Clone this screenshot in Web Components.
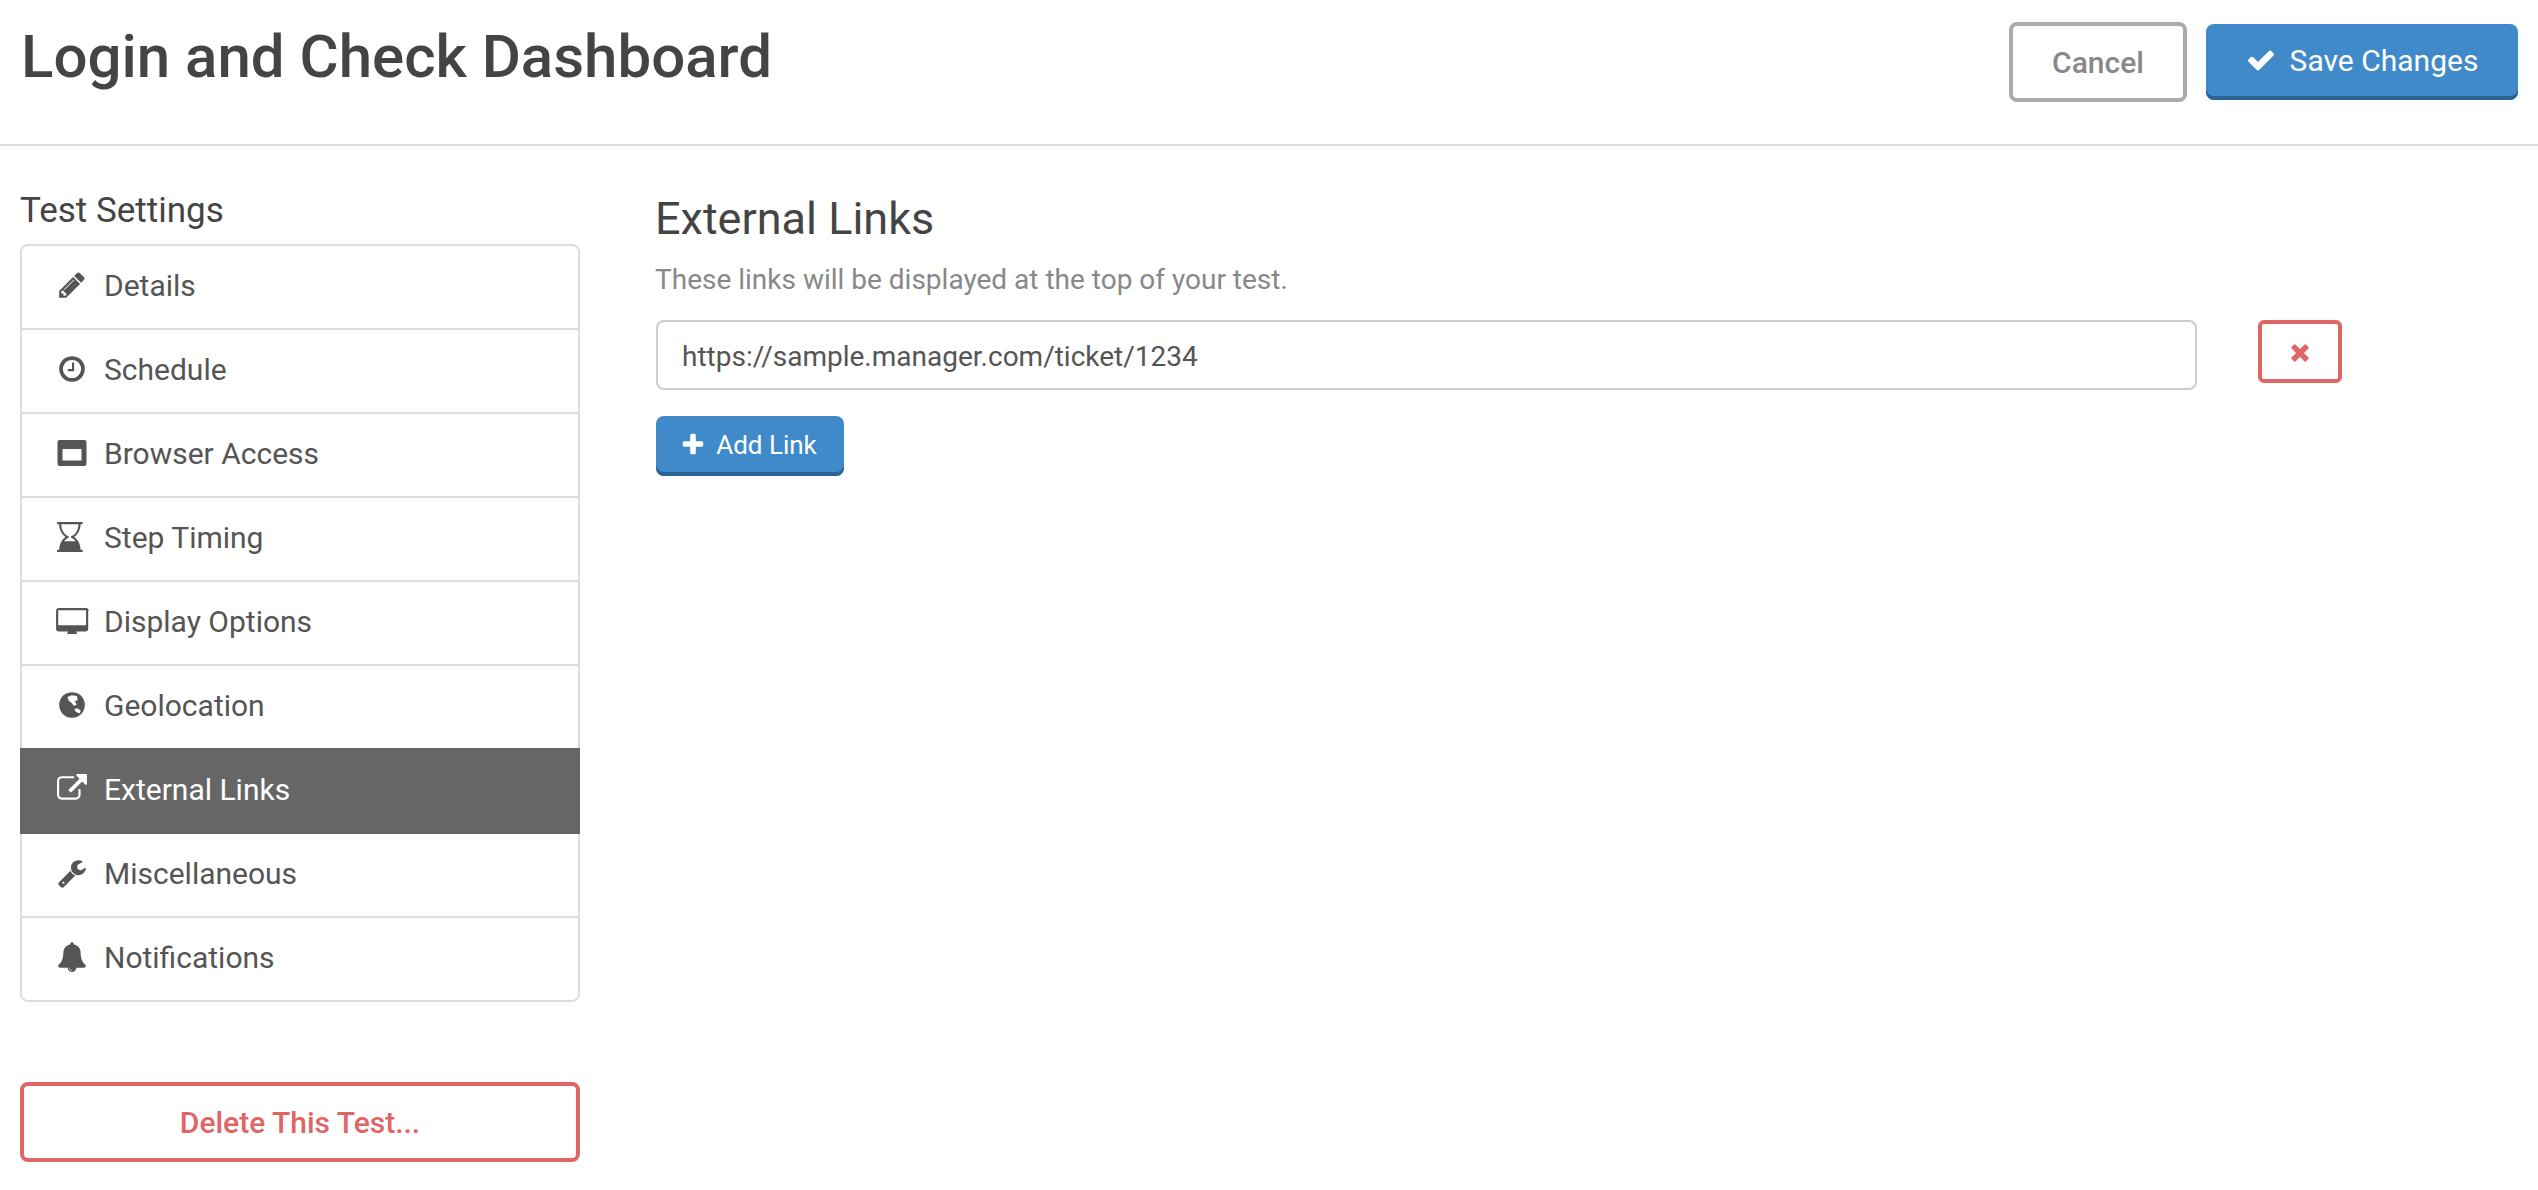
<!DOCTYPE html>
<html lang="en">
<head>
<meta charset="utf-8">
<title>Login and Check Dashboard</title>
<style>
  html, body { margin: 0; background: #fff; }
  body { font-family: Roboto, "Liberation Sans", sans-serif; color: #444; }
</style>
</head>
<body>
<test-page>
  <page-header slot="header" heading="Login and Check Dashboard">
    <ui-button variant="ghost" style="width:178px">Cancel</ui-button>
    <ui-button variant="primary" icon="check" style="width:312px">Save Changes</ui-button>
  </page-header>

  <settings-nav slot="side" heading="Test Settings">
    <nav-item icon="pencil">Details</nav-item>
    <nav-item icon="clock">Schedule</nav-item>
    <nav-item icon="window">Browser Access</nav-item>
    <nav-item icon="hourglass">Step Timing</nav-item>
    <nav-item icon="desktop">Display Options</nav-item>
    <nav-item icon="globe">Geolocation</nav-item>
    <nav-item icon="external" active>External Links</nav-item>
    <nav-item icon="wrench">Miscellaneous</nav-item>
    <nav-item icon="bell">Notifications</nav-item>
  </settings-nav>
  <ui-button slot="side" variant="danger" style="display:flex;margin-top:80px">Delete This Test...</ui-button>

  <links-panel slot="main" heading="External Links" hint="These links will be displayed at the top of your test.">
    <link-row>https://sample.manager.com/ticket/1234</link-row>
    <ui-button slot="actions" variant="primary" size="small" icon="plus" style="width:188px">Add Link</ui-button>
  </links-panel>
</test-page>

<script>
  // Font Awesome 4 style glyphs, most of them on a 1792 grid
  const ICONS = {
    pencil: ["0 0 1792 1792", "M491 1536l91-91-235-235-91 91v107h128v128h107zm523-928q0-22-22-22-10 0-17 7l-542 542q-7 7-7 17 0 22 22 22 10 0 17-7l542-542q7-7 7-17zm-54-192l416 416-832 832h-416v-416zm683 96q0 53-37 90l-166 166-416-416 166-165q36-38 90-38 53 0 91 38l235 234q37 39 37 91z"],
    clock: ["0 0 1792 1792", "M1024 544v448q0 14-9 23t-23 9h-320q-14 0-23-9t-9-23v-64q0-14 9-23t23-9h224v-352q0-14 9-23t23-9h64q14 0 23 9t9 23zm416 352q0-148-73-273t-198-198-273-73-273 73-198 198-73 273 73 273 198 198 273 73 273-73 198-198 73-273zm224 0q0 209-103 385.5t-279.5 279.5-385.5 103-385.5-103-279.5-279.5-103-385.5 103-385.5 279.5-279.5 385.5-103 385.5 103 279.5 279.5 103 385.5z"],
    window: ["0 0 1792 1792", "M150 120h1492q120 0 120 120v1312q0 120-120 120h-1492q-120 0-120-120v-1312q0-120 120-120zm180 540v680h1132v-680z"],
    hourglass: ["0 0 1792 1792", "M1408 128q0 261-106.5 461.5t-266.5 306.5q160 106 266.5 306.5t106.5 461.5h96q14 0 23 9t9 23v64q0 14-9 23t-23 9h-1472q-14 0-23-9t-9-23v-64q0-14 9-23t23-9h96q0-261 106.5-461.5t266.5-306.5q-160-106-266.5-306.5t-106.5-461.5h-96q-14 0-23-9t-9-23v-64q0-14 9-23t23-9h1472q14 0 23 9t9 23v64q0 14-9 23t-23 9h-96zm-534 708q77-29 149-92.5t129.5-152.5 92.5-210 35-253h-1024q0 132 35 253t92.5 210 129.5 152.5 149 92.5q19 7 30.5 23.5t11.5 36.5-11.5 36.5-30.5 23.5q-137 51-244 196h700q-107-145-244-196-19-7-30.5-23.5t-11.5-36.5 11.5-36.5 30.5-23.5z"],
    desktop: ["0 0 1984 1600", "M1856 992v-832q0-13-9.5-22.5t-22.5-9.5h-1600q-13 0-22.5 9.5t-9.5 22.5v832q0 13 9.5 22.5t22.5 9.5h1600q13 0 22.5-9.5t9.5-22.5zm128-832v1088q0 66-47 113t-113 47h-544q0 37 16 77.5t32 71 16 43.5q0 26-19 45t-45 19h-512q-26 0-45-19t-19-45q0-14 16-44t32-70 16-78h-544q-66 0-113-47t-47-113v-1088q0-66 47-113t113-47h1632q66 0 113 47t47 113z"],
    globe: ["0 0 1792 1792", "M896 128q209 0 385.5 103t279.5 279.5 103 385.5-103 385.5-279.5 279.5-385.5 103-385.5-103-279.5-279.5-103-385.5 103-385.5 279.5-279.5 385.5-103zM620 420L880 310 1190 360 1240 590 1060 670 1180 860 1020 960 860 760 700 640zM1030 1120L1260 1110 1420 1240 1340 1400 1120 1300z"],
    external: ["0 0 1792 1792", "M1408 928v320q0 119-84.5 203.5t-203.5 84.5h-832q-119 0-203.5-84.5t-84.5-203.5v-832q0-119 84.5-203.5t203.5-84.5h704q14 0 23 9t9 23v64q0 14-9 23t-23 9h-704q-66 0-113 47t-47 113v832q0 66 47 113t113 47h832q66 0 113-47t47-113v-320q0-14 9-23t23-9h64q14 0 23 9t9 23zm384-864v512q0 26-19 45t-45 19-45-19l-176-176-652 652q-10 10-23 10t-23-10l-114-114q-10-10-10-23t10-23l652-652-176-176q-19-19-19-45t19-45 45-19h512q26 0 45 19t19 45z"],
    wrench: ["0 0 1792 1792", "M448 1472q0-26-19-45t-45-19-45 19-19 45 19 45 45 19 45-19 19-45zm644-420l-682 682q-37 37-90 37-52 0-91-37l-106-108q-38-36-38-90 0-53 38-91l681-681q39 98 114.5 173.5t173.5 114.5zm634-435q0 39-23 106-47 134-164.5 217.5t-258.5 83.5q-185 0-316.5-131.5t-131.5-316.5 131.5-316.5 316.5-131.5q58 0 121.5 16.5t107.5 46.5q16 11 16 28t-16 28l-293 169v224l193 107q5-3 79-48.5t135.5-81 70.5-35.5q15 0 23.5 10t8.5 25z"],
    bell: ["0 0 1792 1792", "M912 1696q0-16-16-16-59 0-101.5-42.5t-42.5-101.5q0-16-16-16t-16 16q0 73 51.5 124.5t124.5 51.5q16 0 16-16zm816-288q0 52-38 90t-90 38h-448q0 106-75 181t-181 75-181-75-75-181h-448q-52 0-90-38t-38-90q50-42 91-88t85-119.5 74.5-158.5 50-206 19.5-260q0-152 117-282.5t307-158.5q-8-19-8-39 0-40 28-68t68-28 68 28 28 68q0 20-8 39 190 28 307 158.5t117 282.5q0 139 19.5 260t50 206 74.5 158.5 85 119.5 91 88z"],
    check: ["0 0 1792 1792", "M1671 566q0 40-28 68l-724 724-136 136q-28 28-68 28t-68-28l-136-136-362-362q-28-28-28-68t28-68l136-136q28-28 68-28t68 28l294 295 656-657q28-28 68-28t68 28l136 136q28 28 28 68z"],
    plus: ["0 0 1792 1792", "M1600 736v192q0 40-28 68t-68 28h-416v416q0 40-28 68t-68 28h-192q-40 0-68-28t-28-68v-416h-416q-40 0-68-28t-28-68v-192q0-40 28-68t68-28h416v-416q0-40 28-68t68-28h192q40 0 68 28t28 68v416h416q40 0 68 28t28 68z"],
    times: ["0 0 1792 1792", "M1490 1322q0 40-28 68l-136 136q-28 28-68 28t-68-28l-294-294-294 294q-28 28-68 28t-68-28l-136-136q-28-28-28-68t28-68l294-294-294-294q-28-28-28-68t28-68l136-136q28-28 68-28t68 28l294 294 294-294q28-28 68-28t68 28l136 136q28 28 28 68t-28 68l-294 294 294 294q28 28 28 68z"],
  };

  const iconSvg = (name, size) => {
    const [box, d] = ICONS[name];
    const [, , w, h] = box.split(" ").map(Number);
    const scale = size / 1792;
    return `<svg width="${w * scale}" height="${h * scale}" viewBox="${box}" fill="currentColor" aria-hidden="true"><path fill-rule="evenodd" d="${d}"/></svg>`;
  };

  customElements.define(
    "test-page",
    class extends HTMLElement {
      constructor() {
        super().attachShadow({ mode: "open" });
        this.shadowRoot.innerHTML = /*html*/ `
          <slot name="header"></slot>
          <div class="body">
            <aside><slot name="side"></slot></aside>
            <main><slot name="main"></slot></main>
          </div>
          <style>
            :host { display: block; height: 1190px; overflow: hidden; }
            .body {
              display: grid;
              grid-template-columns: 560px 1686px;
              column-gap: 76px;
              padding: 45px 0 0 20px;
            }
            aside, main { display: flex; flex-direction: column; }
            main { padding-top: 3px; }
          </style>
        `;
      }
    }
  );

  customElements.define(
    "page-header",
    class extends HTMLElement {
      constructor() {
        super().attachShadow({ mode: "open" });
      }

      connectedCallback() {
        this.shadowRoot.innerHTML = /*html*/ `
          <h1>${this.getAttribute("heading")}</h1>
          <div class="actions"><slot></slot></div>
          <style>
            :host {
              display: flex;
              justify-content: space-between;
              align-items: flex-start;
              height: 144px;
              padding: 0 20px 0 21px;
              border-bottom: 2px solid #ddd;
            }
            h1 {
              margin: 21px 0 0;
              font: 500 60px/72px Roboto, sans-serif;
              color: #444;
            }
            .actions {
              display: flex;
              gap: 19px;
              align-items: center;
              padding-top: 22px;
            }
          </style>
        `;
      }
    }
  );

  customElements.define(
    "ui-button",
    class extends HTMLElement {
      constructor() {
        super().attachShadow({ mode: "open" });
      }

      connectedCallback() {
        const icon = this.getAttribute("icon");
        this.shadowRoot.innerHTML = /*html*/ `
          ${icon ? iconSvg(icon, this.getAttribute("size") == "small" ? 26 : 30) : ""}
          <slot></slot>
          <style>
            :host {
              display: inline-flex;
              align-items: center;
              justify-content: center;
              box-sizing: border-box;
              cursor: pointer;
              border-radius: 8px;
              white-space: nowrap;
            }
            :host([variant="primary"]) {
              height: 76px;
              gap: 14px;
              padding-bottom: 4px;
              background: #418aca;
              color: #fff;
              font: 400 30px Roboto, sans-serif;
              box-shadow: inset 0 -4px 0 #2a6496;
            }
            :host([variant="primary"][size="small"]) {
              height: 60px;
              gap: 10px;
              padding: 0 3px 2px 0;
              font-size: 26px;
            }
            :host([variant="ghost"]) {
              height: 80px;
              border: 4px solid #aaa;
              color: #888;
              font: 500 30px Roboto, sans-serif;
            }
            :host([variant="danger"]) {
              height: 80px;
              border: 4px solid #e06666;
              color: #e06666;
              font: 500 30px Roboto, sans-serif;
            }
          </style>
        `;
      }
    }
  );

  customElements.define(
    "settings-nav",
    class extends HTMLElement {
      constructor() {
        super().attachShadow({ mode: "open" });
      }

      connectedCallback() {
        this.shadowRoot.innerHTML = /*html*/ `
          <h2>${this.getAttribute("heading")}</h2>
          <div class="list" part="list"><slot></slot></div>
          <style>
            :host { display: block; }
            h2 {
              margin: 0 0 13px;
              font: 400 35px/40px Roboto, sans-serif;
              color: #444;
            }
            .list { display: flex; flex-direction: column; }
          </style>
        `;
      }
    }
  );

  customElements.define(
    "nav-item",
    class extends HTMLElement {
      constructor() {
        super().attachShadow({ mode: "open" });
      }

      connectedCallback() {
        this.shadowRoot.innerHTML = /*html*/ `
          <span class="icon">${iconSvg(this.getAttribute("icon"), 30)}</span>
          <slot></slot>
          <style>
            :host {
              display: flex;
              align-items: center;
              box-sizing: border-box;
              height: 86px;
              margin-bottom: -2px;
              padding: 0 0 4px 27px;
              font: 400 30px Roboto, sans-serif;
              color: #555;
              background: #fff;
              border: 2px solid #ddd;
              cursor: pointer;
            }
            :host(:first-child) { border-radius: 8px 8px 0 0; }
            :host(:last-child) { border-radius: 0 0 8px 8px; margin-bottom: 0; }
            :host([active]) {
              position: relative;
              z-index: 1;
              background: #666;
              border-color: #666;
              color: #fff;
            }
            .icon {
              display: flex;
              justify-content: center;
              width: 46px;
              margin-right: 9px;
            }
          </style>
        `;
      }
    }
  );

  customElements.define(
    "links-panel",
    class extends HTMLElement {
      constructor() {
        super().attachShadow({ mode: "open" });
      }

      connectedCallback() {
        this.shadowRoot.innerHTML = /*html*/ `
          <h2>${this.getAttribute("heading")}</h2>
          <p>${this.getAttribute("hint")}</p>
          <div class="rows"><slot></slot></div>
          <div class="actions"><slot name="actions"></slot></div>
          <style>
            :host { display: block; }
            h2 {
              margin: 0 0 0 -1px;
              font: 400 45px/50px Roboto, sans-serif;
              color: #444;
            }
            p {
              margin: 19px 0 0 -1px;
              font: 400 28px/34px Roboto, sans-serif;
              color: #888;
            }
            .rows { margin-top: 23px; }
            .actions { margin-top: 26px; }
          </style>
        `;
      }
    }
  );

  customElements.define(
    "link-row",
    class extends HTMLElement {
      constructor() {
        super().attachShadow({ mode: "open" });
      }

      connectedCallback() {
        this.shadowRoot.innerHTML = /*html*/ `
          <div class="field" role="textbox"><slot></slot></div>
          <button type="button" aria-label="Remove link">${iconSvg("times", 26)}</button>
          <style>
            :host {
              display: flex;
              align-items: flex-start;
              gap: 61px;
            }
            .field {
              box-sizing: border-box;
              width: 1541px;
              height: 70px;
              padding: 2px 24px 0;
              display: flex;
              align-items: center;
              border: 2px solid #ccc;
              border-radius: 8px;
              font: 400 28px Roboto, sans-serif;
              color: #555;
            }
            button {
              box-sizing: border-box;
              display: flex;
              align-items: center;
              justify-content: center;
              width: 84px;
              height: 63px;
              padding: 0;
              background: #fff;
              border: 4px solid #e06666;
              border-radius: 6px;
              color: #e06666;
            }
          </style>
        `;
      }
    }
  );
</script>
</body>
</html>
